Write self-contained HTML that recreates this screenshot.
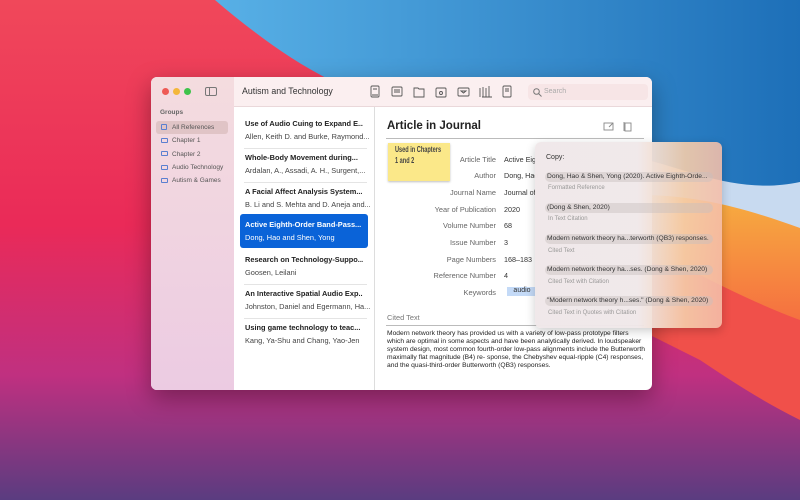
<!DOCTYPE html>
<html><head><meta charset="utf-8"><style>
*{margin:0;padding:0;box-sizing:border-box}
body{width:800px;height:500px;overflow:hidden;position:relative;font-family:"Liberation Sans",sans-serif;background:#e8305a}
.bg{position:absolute;left:0;top:0}
.win{position:absolute;left:151px;top:77px;width:501px;height:313px;border-radius:6px;overflow:hidden;background:#fff;box-shadow:0 8px 24px rgba(0,0,0,.35)}
.side{position:absolute;left:0;top:0;width:83px;height:313px;background:linear-gradient(#f4dcdf,#eccbe2)}
.tb{position:absolute;left:83px;top:0;width:418px;height:30px;background:#fbeff0;border-bottom:1px solid #ead8da}
.dot{position:absolute;top:11px;width:7px;height:7px;border-radius:50%}
.sb{font-size:6.5px;color:#555}
.list{position:absolute;left:83px;top:30px;width:141px;height:283px;background:#fff;border-right:1px solid #ddd}
.item{position:absolute;left:6px;width:128px;height:34px;padding:6px 5px;font-size:7.4px}
.item b{display:block;color:#222;white-space:nowrap;overflow:hidden;margin-bottom:4px}
.item span{color:#444;white-space:nowrap;display:block}
.sep{position:absolute;left:10px;width:123px;height:1px;background:#e4e4e4}
.lab{position:absolute;width:110px;text-align:right;font-size:7.4px;color:#666}
.val{position:absolute;left:353px;font-size:7.2px;color:#333}
.pop{position:absolute;left:535px;top:142px;width:187px;height:186px;border-radius:6px;background:linear-gradient(90deg,rgba(240,232,233,.98) 0%,rgba(240,232,233,.96) 55%,rgba(245,205,170,.9) 80%,rgba(245,190,170,.88) 100%);box-shadow:0 3px 10px rgba(0,0,0,.2);font-size:6.7px;color:#333}
.pi{position:absolute;left:10px;width:168px;height:10px;border-radius:5px;background:rgba(200,190,190,.45);padding:1px 2px;white-space:nowrap;overflow:hidden}
.ps{position:absolute;left:13px;color:#999;font-size:6px}
</style></head><body>
<svg class="bg" width="800" height="500">
<defs>
<linearGradient id="r" x1="0" y1="0" x2="0" y2="1"><stop offset="0" stop-color="#f0485a"/><stop offset=".45" stop-color="#ea2a58"/><stop offset=".75" stop-color="#c03080"/><stop offset="1" stop-color="#5a3c80"/></linearGradient>
<linearGradient id="b" x1="0" y1="0" x2="1" y2="0"><stop offset="0" stop-color="#58b0e6"/><stop offset="1" stop-color="#1d6fb8"/></linearGradient>
<linearGradient id="o" x1="0" y1="0" x2="0" y2="1"><stop offset="0" stop-color="#f7b040"/><stop offset="1" stop-color="#f57040"/></linearGradient>
</defs>
<rect width="800" height="500" fill="url(#r)"/>
<path d="M640 200 C700 195 760 210 800 230 L800 420 C760 400 730 380 700 360 L640 330Z" fill="#f0504a"/>
<path d="M640 190 C700 190 760 205 800 225 L800 320 C760 305 730 290 700 275 L640 260Z" fill="url(#o)"/>
<path d="M600 150 C680 165 740 190 800 180 L800 228 C750 210 700 195 640 195 L600 190Z" fill="#c8daf0"/>
<path d="M215 0 L800 0 L800 182 C740 195 690 170 640 158 C590 148 560 130 520 110 L330 80 C290 60 250 30 215 0Z" fill="url(#b)"/>
</svg>
<div class="win">
<div class="side">
<div class="dot" style="left:11px;background:#ee5a55"></div>
<div class="dot" style="left:22px;background:#f4b73a"></div>
<div class="dot" style="left:33px;background:#3fc34b"></div>
<div style="position:absolute;left:54px;top:10px;width:12px;height:9px;border:1px solid #777;border-radius:2px"><div style="width:4px;height:7px;border-right:1px solid #777"></div></div>
<div style="position:absolute;left:9px;top:32px;font-size:6.5px;font-weight:bold;color:#666">Groups</div>
<div style="position:absolute;left:5px;top:44px;width:72px;height:13px;background:#e0c4c6;border-radius:3px"></div>
<div class="sb" style="position:absolute;left:21px;top:47px">All References</div>
<div class="sb" style="position:absolute;left:21px;top:60px">Chapter 1</div>
<div class="sb" style="position:absolute;left:21px;top:74px">Chapter 2</div>
<div class="sb" style="position:absolute;left:21px;top:87px">Audio Technology</div>
<div class="sb" style="position:absolute;left:21px;top:100px">Autism &amp; Games</div>
<div style="position:absolute;left:10px;top:47px;width:6px;height:6px;border:1px solid #5a7fd0;border-radius:1px"></div>
<div style="position:absolute;left:10px;top:61px;width:7px;height:5px;border:1px solid #5a7fd0;border-radius:1px"></div>
<div style="position:absolute;left:10px;top:74px;width:7px;height:5px;border:1px solid #5a7fd0;border-radius:1px"></div>
<div style="position:absolute;left:10px;top:88px;width:7px;height:5px;border:1px solid #5a7fd0;border-radius:1px"></div>
<div style="position:absolute;left:10px;top:101px;width:7px;height:5px;border:1px solid #5a7fd0;border-radius:1px"></div>
</div>
<div class="tb">
<div style="position:absolute;left:8px;top:9px;font-size:8.8px;color:#333">Autism and Technology</div>
<svg style="position:absolute;left:135px;top:8px" width="150" height="14" fill="none" stroke="#555" stroke-width=".9">
<rect x="2" y="1" width="8" height="11" rx="1"/><path d="M4 4h4M3 10h6"/>
<rect x="23" y="2" width="10" height="9" rx="1"/><path d="M25 5h6M25 7h6"/>
<path d="M45 3h4l1 1h5v8h-10z"/>
<rect x="67" y="3" width="10" height="9" rx="1"/><circle cx="72" cy="8" r="1.5"/>
<rect x="89" y="3" width="11" height="8" rx="1"/><path d="M92 6h5l-2.5 2z"/>
<path d="M111 3v9M114 2v10M117 3v9M120 1v11M113 12h10"/>
<rect x="134" y="1" width="8" height="11" rx="1"/><path d="M136 4h4M136 6h4"/>
</svg>
<div style="position:absolute;left:294px;top:7px;width:120px;height:16px;border-radius:4px;background:#f7e5e6;font-size:7px;color:#aaa;padding:4px 0 0 16px">Search
<svg style="position:absolute;left:5px;top:4px" width="9" height="9" fill="none" stroke="#777" stroke-width="1"><circle cx="3.5" cy="3.5" r="2.8"/><path d="M5.5 5.5l3 3"/></svg></div>
</div>
<div class="list">
<div class="item" style="top:6px"><b>Use of Audio Cuing to Expand E...</b><span>Allen, Keith D. and Burke, Raymond...</span></div>
<div class="sep" style="top:41px"></div>
<div class="item" style="top:40px"><b>Whole-Body Movement during...</b><span>Ardalan, A., Assadi, A. H., Surgent,...</span></div>
<div class="sep" style="top:75px"></div>
<div class="item" style="top:74px"><b>A Facial Affect Analysis System...</b><span>B. Li and S. Mehta and D. Aneja and...</span></div>
<div class="item" style="top:107px;background:#0a63d8;border-radius:3px"><b style="color:#fff">Active Eighth-Order Band-Pass...</b><span style="color:#fff">Dong, Hao and Shen, Yong</span></div>
<div class="item" style="top:142px"><b>Research on Technology-Suppo...</b><span>Goosen, Leilani</span></div>
<div class="sep" style="top:177px"></div>
<div class="item" style="top:176px"><b>An Interactive Spatial Audio Exp...</b><span>Johnston, Daniel and Egermann, Ha...</span></div>
<div class="sep" style="top:211px"></div>
<div class="item" style="top:210px"><b>Using game technology to teac...</b><span>Kang, Ya-Shu and Chang, Yao-Jen</span></div>
</div>
<div style="position:absolute;left:236px;top:43px;font-size:11.5px;font-weight:bold;color:#222">Article in Journal</div>
<svg style="position:absolute;left:452px;top:44px" width="30" height="12" fill="none" stroke="#888" stroke-width=".9"><rect x="1" y="2" width="9" height="7"/><path d="M6 6l4-4"/><rect x="22" y="2" width="6" height="8"/><path d="M21 1v9"/></svg>
<div style="position:absolute;left:235px;top:61px;width:258px;height:1px;background:#bbb"></div>
<div style="position:absolute;left:237px;top:66px;width:62px;height:38px;background:#fbe889;box-shadow:0 1px 2px rgba(0,0,0,.25);overflow:hidden">
<div style="position:absolute;left:7px;top:3px;font-weight:bold;font-size:7px;color:#444;line-height:8.5px;white-space:nowrap;transform:scaleX(.8) scaleY(1.2);transform-origin:0 0">Used in Chapters<br>1 and 2</div></div>
<div class="lab" style="left:235px;top:78px">Article Title</div>
<div class="lab" style="left:235px;top:94px">Author</div>
<div class="lab" style="left:235px;top:111px">Journal Name</div>
<div class="lab" style="left:235px;top:128px">Year of Publication</div>
<div class="lab" style="left:235px;top:144px">Volume Number</div>
<div class="lab" style="left:235px;top:161px">Issue Number</div>
<div class="lab" style="left:235px;top:178px">Page Numbers</div>
<div class="lab" style="left:235px;top:194px">Reference Number</div>
<div class="lab" style="left:235px;top:211px">Keywords</div>
<div class="val" style="top:78px">Active Eig</div>
<div class="val" style="top:94px">Dong, Hao</div>
<div class="val" style="top:111px">Journal of</div>
<div class="val" style="top:128px">2020</div>
<div class="val" style="top:144px">68</div>
<div class="val" style="top:161px">3</div>
<div class="val" style="top:178px">168–183</div>
<div class="val" style="top:194px">4</div>
<div style="position:absolute;left:356px;top:210px;width:30px;height:9px;background:#c4daf7;font-size:7px;text-align:center;color:#333">audio</div>
<div style="position:absolute;left:236px;top:236px;font-size:7.4px;color:#777">Cited Text</div>
<div style="position:absolute;left:235px;top:248px;width:258px;height:1px;background:#bbb"></div>
<div style="position:absolute;left:236px;top:253px;width:258px;font-size:6.7px;line-height:8.1px;color:#222">Modern network theory has provided us with a variety of low-pass prototype filters which are optimal in some aspects and have been analytically derived. In loudspeaker system design, most common fourth-order low-pass alignments in­clude the Butterworth maximally flat magnitude (B4) re- sponse, the Chebyshev equal-ripple (C4) responses, and the quasi-third-order Butterworth (QB3) responses.</div>
</div>
<div class="pop">
<div style="position:absolute;left:11px;top:12px;font-size:7px">Copy:</div>
<div class="pi" style="top:30px">Dong, Hao &amp; Shen, Yong (2020). Active Eighth-Orde...</div>
<div class="ps" style="top:43px">Formatted Reference</div>
<div class="pi" style="top:61px">(Dong &amp; Shen, 2020)</div>
<div class="ps" style="top:74px">In Text Citation</div>
<div class="pi" style="top:92px">Modern network theory ha...terworth (QB3) responses.</div>
<div class="ps" style="top:106px">Cited Text</div>
<div class="pi" style="top:123px">Modern network theory ha...ses. (Dong &amp; Shen, 2020)</div>
<div class="ps" style="top:137px">Cited Text with Citation</div>
<div class="pi" style="top:154px">"Modern network theory h...ses." (Dong &amp; Shen, 2020)</div>
<div class="ps" style="top:168px">Cited Text in Quotes with Citation</div>
</div>
</body></html>
